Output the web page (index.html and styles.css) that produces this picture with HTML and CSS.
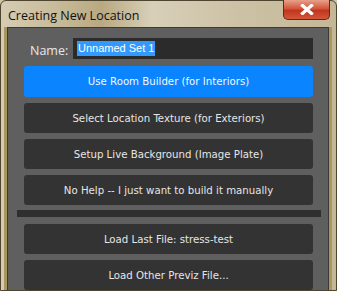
FILE: index.html
```html
<!DOCTYPE html>
<html>
<head>
<meta charset="utf-8">
<link rel="stylesheet" href="styles.css">
</head>
<body>
<div class="window">
  <div class="titlebar">
    <span class="title">Creating New Location</span>
    <div class="close"><svg width="14" height="11" viewBox="0 0 14 11"><path d="M2.5 1.5 L11.5 9.5 M11.5 1.5 L2.5 9.5" stroke="#fff" stroke-width="3.2" stroke-linecap="square"/></svg></div>
  </div>
  <div class="panel">
    <div class="name-row">
      <span class="label">Name:</span>
      <div class="input"><span class="sel">Unnamed Set 1</span></div>
    </div>
    <div class="btn active">Use Room Builder (for Interiors)</div>
    <div class="btn">Select Location Texture (for Exteriors)</div>
    <div class="btn">Setup Live Background (Image Plate)</div>
    <div class="btn">No Help -- I just want to build it manually</div>
    <div class="sep"></div>
    <div class="btn">Load Last File: stress-test</div>
    <div class="btn">Load Other Previz File...</div>
  </div>
</div>
</body>
</html>
```
FILE: styles.css
```css
html, body { margin: 0; padding: 0; }
body { width: 337px; height: 291px; overflow: hidden; background: #cfc5a9; }
.window {
  width: 337px; height: 291px; box-sizing: border-box;
  background: linear-gradient(90deg, #d6ccb2 0%, #c9bd9d 15%, #b9a982 30%, #d8cfb8 45%, #cdc2a6 70%, #c4b796 100%);
  border: 1px solid #4d4530;
  border-radius: 6px 6px 0 0;
  display: flex; flex-direction: column;
}
.titlebar { height: 28px; position: relative; display: flex; align-items: center; }
.title {
  font-family: "Open Sans", "DejaVu Sans", sans-serif; font-size: 12.5px; color: #111;
  margin-left: 7px; margin-top: 2px;
}
.close {
  position: absolute; right: 6px; top: -1px; width: 47px; height: 20px;
  border: 1px solid #5a2b1e; border-top: none; border-radius: 0 0 5px 5px;
  background: linear-gradient(#e8a08a 0%, #d2573b 45%, #c0361d 55%, #d2573b 100%);
  display: flex; align-items: center; justify-content: center; box-sizing: border-box;
}
.panel {
  flex: 1; margin: 0 7px 0 6px; background: #5f5f5f;
  border: 1px solid #3b3b3b; border-bottom: none;
  box-shadow: -3px 0 0 #a89860, 3px 0 0 #a89860;
  padding: 10px 15px 0 16px;
  display: flex; flex-direction: column; gap: 6px;
  font-family: "DejaVu Sans", "Liberation Sans", sans-serif; font-size: 10.2px; color: #e6e6e6;
}
.name-row { display: flex; align-items: center; height: 21px; margin-bottom: 1px; flex-shrink: 0; }
.label {
  font-family: "Open Sans", "DejaVu Sans", sans-serif; font-size: 12.5px; color: #e8e8e8;
  margin-left: 6px; width: 43px; margin-top: 3px;
}
.input {
  flex: 1; height: 21px; background: #2b2b2b; display: flex; align-items: center;
}
.sel {
  background: #3399ff; color: #fff; margin-left: 4px; padding: 0 1px;
  font-family: "Liberation Sans", sans-serif; font-size: 11px; line-height: 15px;
}
.btn {
  height: 30px; background: #333333; border-radius: 3px;
  display: flex; align-items: center; justify-content: center; flex-shrink: 0;
}
.btn.active { background: #0a84ff; color: #f4f8ff; height: 31px; }
.sep {
  height: 7px; background: #2f2f2f; margin: -1px -8px 1px -7px; flex-shrink: 0;
}
```
